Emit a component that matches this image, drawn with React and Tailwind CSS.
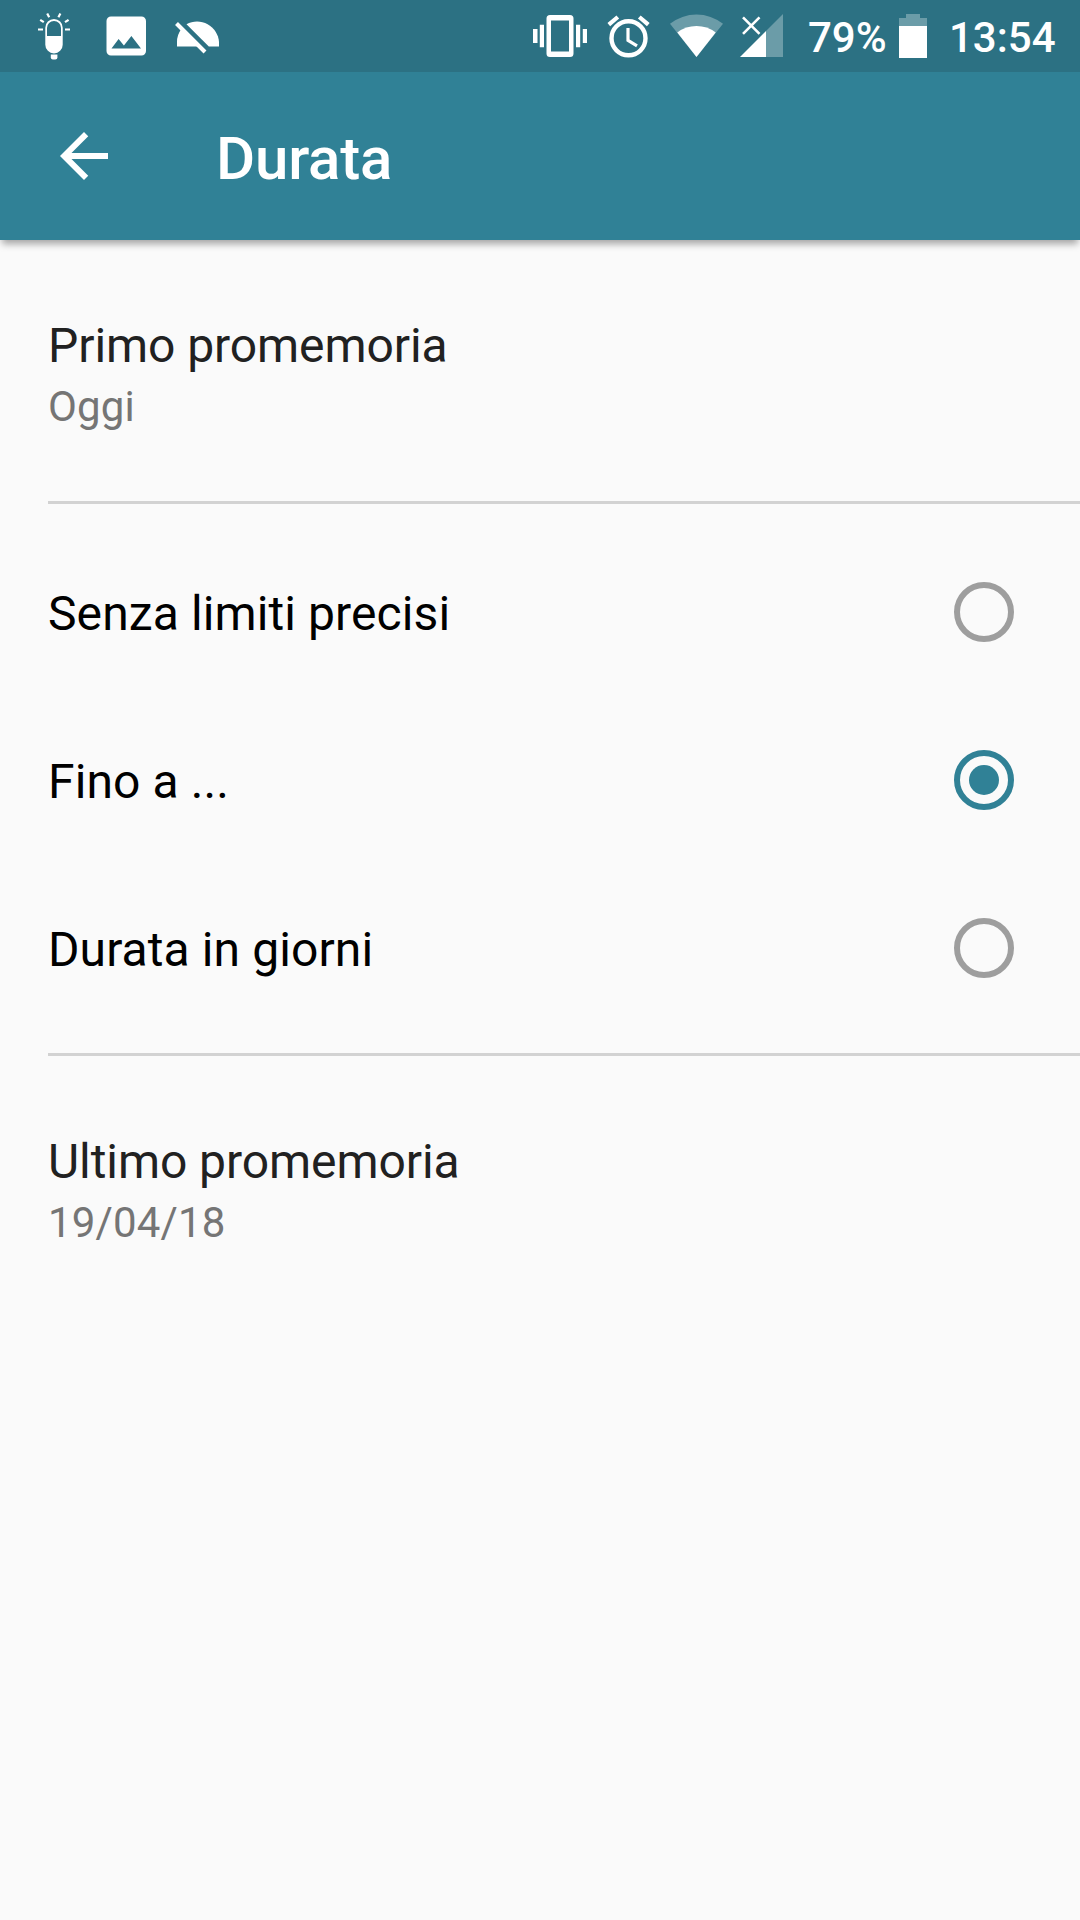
function Icon({ x, w, className = "", children }) {
  return (
    <svg className={"block shrink-0 " + className} width={w} height="72" viewBox={`${x} 0 ${w} 72`} fill="#fff">
      {children}
    </svg>
  );
}

function StatusBar() {
  return (
    <div className="flex h-[72px] items-center bg-[#2c7183] text-[42px] leading-[50px] font-medium text-white">
      <Icon x={36} w={36} className="ml-9">
        <g stroke="#fff" strokeWidth="2.2">
          <path d="M38 29.5h5M65 29.5h5M40.2 19.8l3.6 2.4M68.6 19.8l-3.6 2.4M47.2 13.4l2 3.8M60.4 13.4l-2 3.8" />
        </g>
        <path d="M45.300 27.700a8.700 8.700 0 0 1 17.400 0v17a8.700 8.700 0 0 1-17.400 0zM47 36h14v-8a7 7 0 0 0-14 0z" fillRule="evenodd" />
        <path d="M50.800 54.500h6.600v3a2 2 0 0 1-2 2h-2.600a2 2 0 0 1-2-2z" />
      </Icon>
      <Icon x={106} w={41} className="ml-[34px]">
        <path fillRule="evenodd" d="M111 16.500h30.500a4.500 4.500 0 0 1 4.500 4.500v30a4.500 4.500 0 0 1-4.500 4.500H111a4.500 4.500 0 0 1-4.500-4.500V21a4.500 4.500 0 0 1 4.500-4.500zM111.500 48.500h29.500l-9.600-12.600-7.500 9.500-5.300-6.300z" />
      </Icon>
      <Icon x={174} w={46} className="ml-[27px]">
        <path d="M186.500 24.200A22 22 0 0 1 219 42v4.500h-10.200z" />
        <path d="M181 29.600L197.500 46.500H177V42a21 21 0 0 1 4-12.400z" />
        <path d="M176.500 23.500l28.500 28.500" stroke="#fff" strokeWidth="4" />
      </Icon>

      <Icon x={532} w={56} className="ml-auto">
        <path fillRule="evenodd" d="M550 15h20a3.500 3.500 0 0 1 3.500 3.500v35a3.500 3.500 0 0 1-3.500 3.500h-20a3.500 3.500 0 0 1-3.500-3.500v-35a3.500 3.500 0 0 1 3.500-3.500zM551 20.500v31h18v-31z" />
        <path d="M533 29h4.500v14H533zM539.800 24.700h4.200v22.600h-4.200zM576 24.700h4.200v22.600H576zM582.800 29h4.200v14h-4.200z" />
      </Icon>
      <Icon x={606} w={46} className="ml-[18px]">
        <circle cx="628.500" cy="38.300" r="17" fill="none" stroke="#fff" strokeWidth="4.400" />
        <path d="M608.800 24.600l9-7.600M648.300 24.600l-9-7.600" stroke="#fff" strokeWidth="4.200" />
        <path d="M628 28v12.300l9 5.500" fill="none" stroke="#fff" strokeWidth="3.200" />
      </Icon>
      <Icon x={669} w={55} className="ml-[17px]">
        <path d="M696.500 57L670 23.700a43 43 0 0 1 53 0z" opacity=".3" />
        <path d="M696.500 57L677.300 32.400a32 32 0 0 1 38.400 0z" />
      </Icon>
      <Icon x={739} w={45} className="ml-[15px]">
        <path d="M766 31l17-17v43h-17z" opacity=".3" />
        <path d="M740 57l26-26v26z" />
        <path d="M743 17.300l16.500 16.500M759.500 17.300L743 33.800" stroke="#fff" strokeWidth="2.600" />
      </Icon>
      <span className="ml-6 w-[80px] pt-1 whitespace-nowrap">79%</span>
      <Icon x={898} w={30} className="ml-[10px]">
        <path d="M906 14h14v4h7v8h-28v-8h7z" opacity=".3" />
        <path d="M899 26h28v32h-28z" />
      </Icon>
      <span className="ml-[21px] w-[131px] pt-1 whitespace-nowrap">13:54</span>
    </div>
  );
}

function AppBar() {
  return (
    <header className="flex h-[168px] items-center bg-[#308196] shadow-[0_6px_7px_-2px_rgba(0,0,0,0.34)]">
      <svg className="ml-12 block" width="72" height="72" viewBox="0 0 24 24" fill="#fff">
        <path d="M20 11H7.830l5.590-5.590L12 4l-8 8 8 8 1.410-1.410L7.830 13H20v-2z" />
      </svg>
      <h1 className="ml-24 pt-1.5 text-[60px] leading-[70px] font-medium tracking-[-0.2px] text-white">Durata</h1>
    </header>
  );
}

function Setting({ title, value, className }) {
  return (
    <div className={className}>
      <div className="text-[48px] leading-[56px] tracking-[-0.07px] text-[#212121]">{title}</div>
      <div className="mt-2 text-[42px] leading-[50px] tracking-[0.15px] text-[#757575]">{value}</div>
    </div>
  );
}

function Option({ label, checked }) {
  return (
    <label className="flex h-[168px] items-center justify-between pr-[66px] text-[48px] leading-[56px] tracking-[0.1px] text-black">
      <span className="pt-[3px]">{label}</span>
      <span
        className={
          "flex size-[60px] items-center justify-center rounded-full border-6 " +
          (checked ? "border-[#308196]" : "border-[#9e9e9e]")
        }
      >
        {checked && <span className="size-[30px] rounded-full bg-[#308196]" />}
      </span>
    </label>
  );
}

export default function App() {
  return (
    <div className="flex h-[1920px] w-[1080px] flex-col overflow-hidden bg-[#fafafa] font-['Roboto',sans-serif]">
      <StatusBar />
      <AppBar />
      <main className="flex flex-col pl-12">
        <Setting title="Primo promemoria" value="Oggi" className="h-[261px] pt-[78px]" />
        <div className="h-[3px] bg-[#d2d2d2]" />
        <div className="h-[549px] pt-6">
          <Option label="Senza limiti precisi" />
          <Option label="Fino a ..." checked />
          <Option label="Durata in giorni" />
        </div>
        <div className="h-[3px] bg-[#d2d2d2]" />
        <Setting title="Ultimo promemoria" value="19/04/18" className="pt-[78px]" />
      </main>
    </div>
  );
}
